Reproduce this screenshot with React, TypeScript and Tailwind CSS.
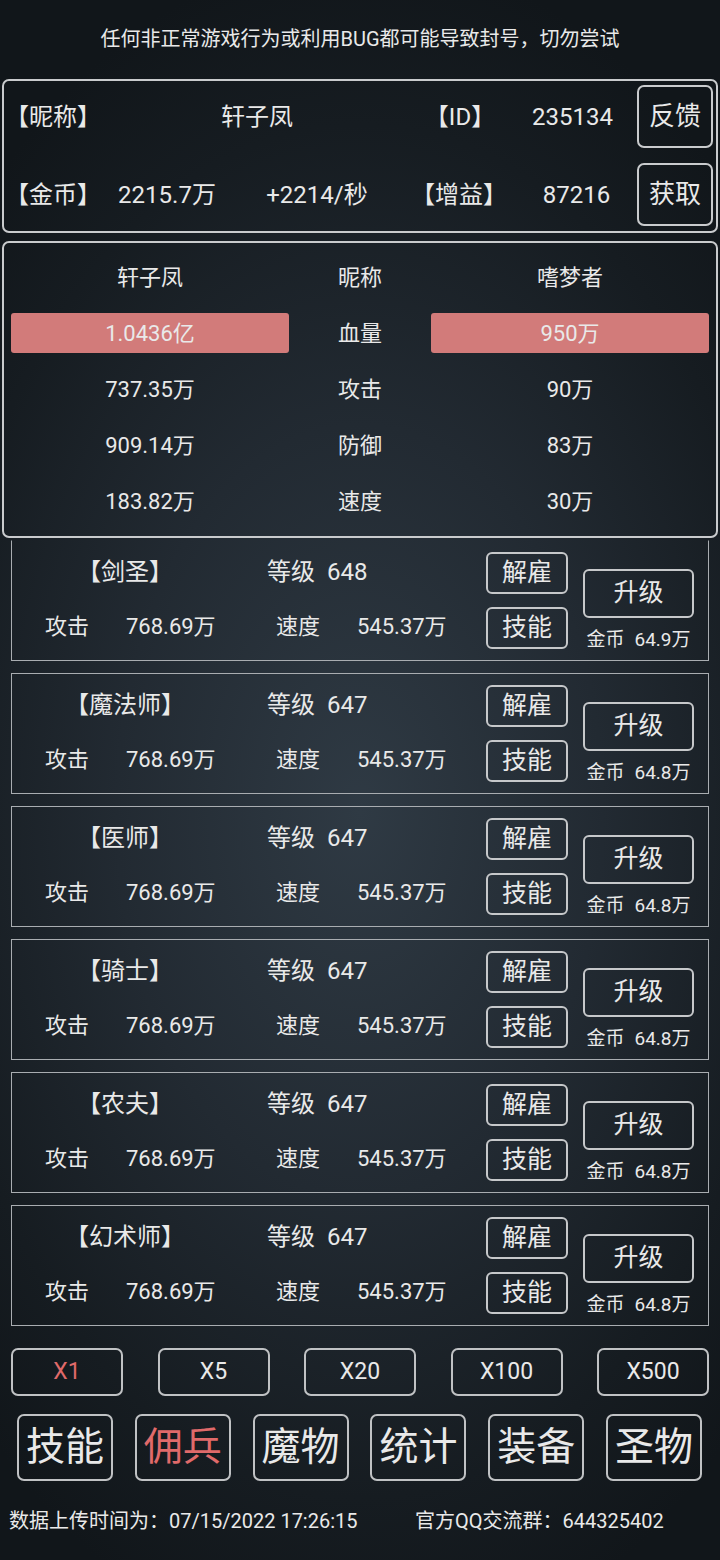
import React from "react";

const cards = [
  { name: "【剑圣】", lv: "648", cost: "64.9万" },
  { name: "【魔法师】", lv: "647", cost: "64.8万" },
  { name: "【医师】", lv: "647", cost: "64.8万" },
  { name: "【骑士】", lv: "647", cost: "64.8万" },
  { name: "【农夫】", lv: "647", cost: "64.8万" },
  { name: "【幻术师】", lv: "647", cost: "64.8万" },
];

const stats = [
  { l: "737.35万", m: "攻击", r: "90万" },
  { l: "909.14万", m: "防御", r: "83万" },
  { l: "183.82万", m: "速度", r: "30万" },
];

function Card({ c, first }: { c: (typeof cards)[number]; first: boolean }) {
  return (
    <div
      className={
        "mx-[11px] h-[121px] border-[1.5px] border-[#a9adb1] flex items-start " +
        (first ? "border-t-transparent mt-[2px]" : "mt-[12px]")
      }
    >
      <div className="w-[474px] flex flex-col pt-[10.5px] gap-[15px]">
        <div className="h-[40px] flex items-center">
          <div className="w-[226px] text-center text-[24px]">{c.name}</div>
          <div className="pl-[29px] flex gap-[12px] text-[24px]">
            <span>等级</span>
            <span>{c.lv}</span>
          </div>
        </div>
        <div className="h-[40px] flex items-center text-[22px]">
          <span className="pl-[33px] w-[114px]">攻击</span>
          <span className="w-[150px]">768.69万</span>
          <span className="w-[81px]">速度</span>
          <span>545.37万</span>
        </div>
      </div>
      <div className="flex flex-col pt-[10.5px] gap-[13px]">
        <div className="w-[82px] h-[42px] rounded-[6px] border-2 border-[#c6c8ca] flex items-center justify-center text-[25px]">
          解雇
        </div>
        <div className="w-[82px] h-[42px] rounded-[6px] border-2 border-[#c6c8ca] flex items-center justify-center text-[25px]">
          技能
        </div>
      </div>
      <div className="ml-[15px] flex flex-col items-center pt-[27.5px]">
        <div className="w-[111px] h-[49px] rounded-[6px] border-2 border-[#c6c8ca] flex items-center justify-center text-[25px]">
          升级
        </div>
        <div className="mt-[10px] h-[24px] flex items-center gap-[10px] text-[19px] leading-none">
          <span>金币</span>
          <span>{c.cost}</span>
        </div>
      </div>
    </div>
  );
}

export default function App() {
  return (
    <div className="w-[720px] h-[1560px] overflow-hidden text-[#e9e9e9] font-[Roboto,'Noto_Sans_CJK_SC',sans-serif] bg-[radial-gradient(ellipse_75%_55%_at_50%_52%,#2f3a44_0%,#222a32_45%,#161c21_80%,#11161a_100%)] flex flex-col">
      <div className="h-[79px] flex items-center justify-center text-[20px] pb-[2px]">
        任何非正常游戏行为或利用BUG都可能导致封号，切勿尝试
      </div>

      <div className="mx-[2px] h-[154px] rounded-[7px] border-2 border-[#c9cbcd] flex flex-col pt-[4px] gap-[15px] text-[24px]">
        <div className="h-[63px] flex items-center">
          <div className="w-[98px] text-center">【昵称】</div>
          <div className="w-[310px] text-center">轩子凤</div>
          <div className="w-[96px] text-center">【ID】</div>
          <div className="w-[129px] text-center">235134</div>
          <div className="w-[76px] h-[63px] rounded-[7px] border-2 border-[#c9cbcd] flex items-center justify-center text-[26px]">
            反馈
          </div>
        </div>
        <div className="h-[63px] flex items-center">
          <div className="w-[98px] text-center">【金币】</div>
          <div className="w-[130px] text-center">2215.7万</div>
          <div className="w-[170px] text-center">+2214/秒</div>
          <div className="w-[114px] text-center">【增益】</div>
          <div className="w-[121px] text-center">87216</div>
          <div className="w-[76px] h-[63px] rounded-[7px] border-2 border-[#c9cbcd] flex items-center justify-center text-[26px]">
            获取
          </div>
        </div>
      </div>

      <div className="mx-[2px] mt-[8px] h-[297px] rounded-[7px] border-2 border-[#c9cbcd] flex flex-col pt-[6px] px-[7px] text-[22px]">
        <div className="h-[56px] flex items-center">
          <div className="w-[278px] text-center">轩子凤</div>
          <div className="w-[142px] text-center">昵称</div>
          <div className="w-[278px] text-center">嗜梦者</div>
        </div>
        <div className="h-[56px] flex items-center">
          <div className="w-[278px] h-[40px] rounded-[3px] bg-[#d27b7a] flex items-center justify-center">
            1.0436亿
          </div>
          <div className="w-[142px] text-center">血量</div>
          <div className="w-[278px] h-[40px] rounded-[3px] bg-[#d27b7a] flex items-center justify-center">
            950万
          </div>
        </div>
        {stats.map((s) => (
          <div key={s.m} className="h-[56px] flex items-center">
            <div className="w-[278px] text-center">{s.l}</div>
            <div className="w-[142px] text-center">{s.m}</div>
            <div className="w-[278px] text-center">{s.r}</div>
          </div>
        ))}
      </div>

      {cards.map((c, i) => (
        <Card key={i} c={c} first={i === 0} />
      ))}

      <div className="mt-[22px] px-[11px] flex justify-between">
        {["X1", "X5", "X20", "X100", "X500"].map((x, i) => (
          <div
            key={x}
            className={
              "w-[112px] h-[48px] rounded-[7px] border-2 border-[#c0c2c4] flex items-center justify-center text-[23px] " +
              (i === 0 ? "text-[#e06a6a]" : "")
            }
          >
            {x}
          </div>
        ))}
      </div>

      <div className="mt-[18px] pl-[17px] pr-[18px] flex justify-between">
        {["技能", "佣兵", "魔物", "统计", "装备", "圣物"].map((t, i) => (
          <div
            key={t}
            className={
              "w-[96px] h-[67px] rounded-[7px] border-2 border-[#c0c2c4] flex items-center justify-center text-[39px] " +
              (i === 1 ? "text-[#e06a6a]" : "")
            }
          >
            {t}
          </div>
        ))}
      </div>

      <div className="mt-[28px] flex items-center text-[20px] h-[24px]">
        <span className="pl-[9px] w-[415px]">数据上传时间为：07/15/2022 17:26:15</span>
        <span>官方QQ交流群：644325402</span>
      </div>
    </div>
  );
}
